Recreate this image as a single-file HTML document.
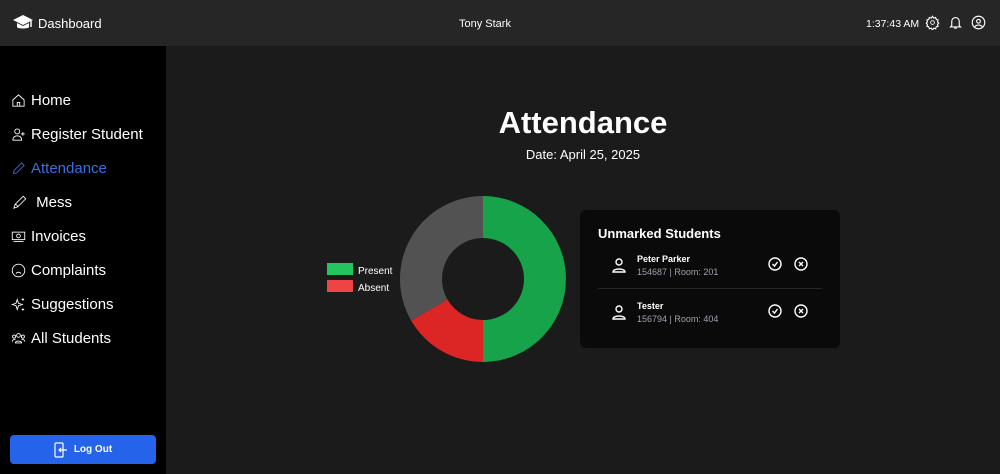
<!DOCTYPE html>
<html><head><meta charset="utf-8"><style>
*{margin:0;padding:0;box-sizing:border-box}
body{width:1000px;height:474px;overflow:hidden;background:#1b1b1b;font-family:"Liberation Sans",sans-serif;color:#fff;position:relative}
.hdr{position:absolute;left:0;top:0;width:1000px;height:46px;background:#262626}
.side{position:absolute;left:0;top:46px;width:166px;height:428px;background:#000}
.nav{position:absolute;left:11px;font-size:15px;display:flex;align-items:center;gap:5px}
.nav svg{width:15px;height:15px;fill:none;stroke:#fff;stroke-width:1.4}
.blue{color:#3b6fe0}.blue svg{stroke:#3b6fe0}
.abs{position:absolute}
.ic{fill:none;stroke:#fff;stroke-width:1.4}
</style></head><body>
<div class="hdr"></div>
<svg class="abs" style="left:13px;top:14px" width="20" height="17" viewBox="0 0 20 17"><path d="M10 1L0 6l10 5 10-5z" fill="#fff"/><path d="M4 9v4c0 2 12 2 12 0V9l-6 3z" fill="#fff"/><path d="M18 7v6" stroke="#fff" stroke-width="1.5"/></svg>
<div class="abs" style="left:38px;top:16px;font-size:13px">Dashboard</div>
<div class="abs" style="left:459px;top:18px;font-size:11px">Tony Stark</div>
<div class="abs" style="left:866px;top:18px;font-size:10.5px">1:37:43 AM</div>
<svg class="abs ic" style="left:925px;top:15px" width="15" height="15" viewBox="0 0 24 24"><circle cx="12" cy="12" r="3"/><path d="M12 2l2 3 3-1 1 3 3 1-1 3 2 2-2 2 1 3-3 1-1 3-3-1-2 3-2-3-3 1-1-3-3-1 1-3-2-2 2-2-1-3 3-1 1-3 3 1z" stroke-width="1.8"/></svg>
<svg class="abs ic" style="left:948px;top:15px" width="15" height="15" viewBox="0 0 24 24"><path d="M6 17V10a6 6 0 0112 0v7l2 2H4zM10 21h4" stroke-width="1.8"/></svg>
<svg class="abs ic" style="left:971px;top:15px" width="15" height="15" viewBox="0 0 24 24"><circle cx="12" cy="12" r="10" stroke-width="1.8"/><circle cx="12" cy="10" r="3" stroke-width="1.8"/><path d="M6 19c2-4 10-4 12 0" stroke-width="1.8"/></svg>

<div class="side"></div>
<div class="nav" style="top:92px"><svg viewBox="0 0 24 24"><path d="M3 11l9-8 9 8v10H3zM10 21v-6h4v6"/></svg>Home</div>
<div class="nav" style="top:126px"><svg viewBox="0 0 24 24"><circle cx="10" cy="7" r="4"/><path d="M3 21c0-5 4-7 7-7s7 2 7 7zM19 8v6M16 11h6"/></svg>Register Student</div>
<div class="nav blue" style="top:160px"><svg viewBox="0 0 24 24"><path d="M4 20l1-5L17 3l4 4L9 19z"/></svg>Attendance</div>
<div class="nav" style="top:194px;left:12px"><svg viewBox="0 0 24 24"><path d="M3 21l2-6L18 2l4 4L9 19zM5 15c2 0 4 2 4 4"/></svg>&nbsp;Mess</div>
<div class="nav" style="top:228px"><svg viewBox="0 0 24 24"><rect x="2" y="5" width="20" height="12"/><circle cx="12" cy="11" r="3"/><path d="M4 20h16"/></svg>Invoices</div>
<div class="nav" style="top:262px"><svg viewBox="0 0 24 24"><circle cx="12" cy="12" r="10"/><path d="M8 17c2-3 6-3 8 0M9 9h.1M15 9h.1"/></svg>Complaints</div>
<div class="nav" style="top:296px"><svg viewBox="0 0 24 24"><path d="M10 4l2 6 6 2-6 2-2 6-2-6-6-2 6-2zM19 2v4M17 4h4M19 18v4M17 20h4"/></svg>Suggestions</div>
<div class="nav" style="top:330px"><svg viewBox="0 0 24 24"><circle cx="12" cy="7" r="3"/><circle cx="5" cy="9" r="2.5"/><circle cx="19" cy="9" r="2.5"/><path d="M7 19c0-4 10-4 10 0zM2 17c0-3 3-4 5-3M22 17c0-3-3-4-5-3"/></svg>All Students</div>

<div class="abs" style="left:10px;top:435px;width:146px;height:29px;background:#2563eb;border-radius:4px;display:flex;align-items:center;justify-content:center;gap:6px;font-size:10px;font-weight:bold">
<svg width="14" height="16" viewBox="0 0 14 16" fill="none" stroke="#fff" stroke-width="1.2"><rect x="1" y="1" width="8" height="14" rx="1"/><path d="M13 8H5M7 6L5 8l2 2"/></svg>Log Out</div>

<div class="abs" style="left:166px;top:105px;width:834px;text-align:center;font-size:31px;font-weight:bold">Attendance</div>
<div class="abs" style="left:166px;top:147px;width:834px;text-align:center;font-size:13px">Date: April 25, 2025</div>

<div class="abs" style="left:327px;top:263px;width:26px;height:12px;background:#22c55e"></div>
<div class="abs" style="left:358px;top:266px;font-size:10px">Present</div>
<div class="abs" style="left:327px;top:280px;width:26px;height:12px;background:#ef4444"></div>
<div class="abs" style="left:358px;top:283px;font-size:10px">Absent</div>

<svg class="abs" style="left:0;top:0" width="1000" height="474">
<path d="M483 196A83 83 0 0 1 483 362L483 320A41 41 0 0 0 483 238Z" fill="#16a34a"/>
<path d="M483 362A83 83 0 0 1 411.1 320.5L447.5 299.5A41 41 0 0 0 483 320Z" fill="#dc2626"/>
<path d="M411.1 320.5A83 83 0 0 1 483 196L483 238A41 41 0 0 0 447.5 299.5Z" fill="#525252"/>
</svg>

<div class="abs" style="left:580px;top:210px;width:260px;height:138px;background:#0a0a0a;border-radius:6px"></div>
<div class="abs" style="left:598px;top:226px;font-size:13px;font-weight:bold">Unmarked Students</div>
<div class="abs" style="left:598px;top:288px;width:224px;height:1px;background:#262626"></div>

<svg class="abs ic" style="left:612px;top:257px" width="14" height="16" viewBox="0 0 14 16" stroke-width="1.1"><circle cx="7" cy="5" r="3"/><path d="M1 15c0-4 12-4 12 0z"/></svg>
<div class="abs" style="left:637px;top:254px;font-size:9px;font-weight:bold">Peter Parker</div>
<div class="abs" style="left:637px;top:267px;font-size:9px;color:#9ca3af">154687 | Room: 201</div>
<svg class="abs ic" style="left:768px;top:257px" width="14" height="14" viewBox="0 0 14 14" stroke-width="1.1"><circle cx="7" cy="7" r="6"/><path d="M4.5 7l2 2 3-4"/></svg>
<svg class="abs ic" style="left:794px;top:257px" width="14" height="14" viewBox="0 0 14 14" stroke-width="1.1"><circle cx="7" cy="7" r="6"/><path d="M5 5l4 4M9 5l-4 4"/></svg>

<svg class="abs ic" style="left:612px;top:304px" width="14" height="16" viewBox="0 0 14 16" stroke-width="1.1"><circle cx="7" cy="5" r="3"/><path d="M1 15c0-4 12-4 12 0z"/></svg>
<div class="abs" style="left:637px;top:301px;font-size:9px;font-weight:bold">Tester</div>
<div class="abs" style="left:637px;top:314px;font-size:9px;color:#9ca3af">156794 | Room: 404</div>
<svg class="abs ic" style="left:768px;top:304px" width="14" height="14" viewBox="0 0 14 14" stroke-width="1.1"><circle cx="7" cy="7" r="6"/><path d="M4.5 7l2 2 3-4"/></svg>
<svg class="abs ic" style="left:794px;top:304px" width="14" height="14" viewBox="0 0 14 14" stroke-width="1.1"><circle cx="7" cy="7" r="6"/><path d="M5 5l4 4M9 5l-4 4"/></svg>
</body></html>
